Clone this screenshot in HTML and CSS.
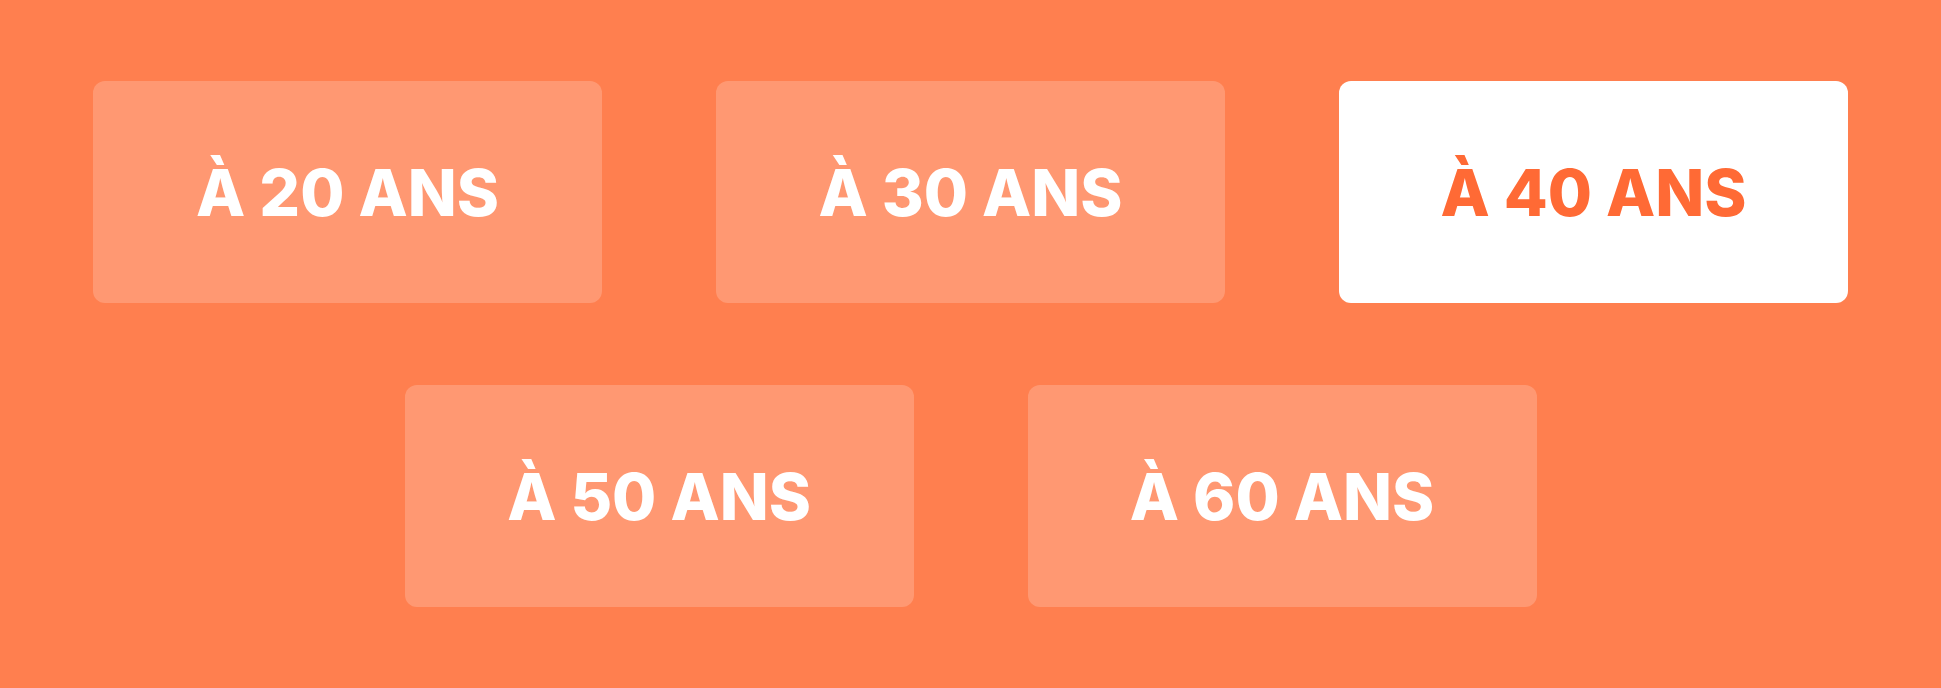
FILE: index.html
```html
<!DOCTYPE html>
<html lang="fr">
<head>
    <meta charset="UTF-8">
    <meta name="viewport" content="width=device-width, initial-scale=1.0">
    <title>Âge</title>
    <link rel="stylesheet" href="styles.css">
</head>
<body>
    <div class="ages">
        <div class="row">
            <button class="age-btn">À 20 ANS</button>
            <button class="age-btn">À 30 ANS</button>
            <button class="age-btn active">À 40 ANS</button>
        </div>
        <div class="row">
            <button class="age-btn">À 50 ANS</button>
            <button class="age-btn">À 60 ANS</button>
        </div>
    </div>
</body>
</html>
```

FILE: styles.css
```css
html, body {
    margin: 0;
    height: 100%;
}
body {
    font-family: Inter, "Liberation Sans", Arial, sans-serif;
    background-color: #ff7f4f;
    display: flex;
    justify-content: center;
    align-items: center;
}
.ages {
    display: flex;
    flex-direction: column;
    align-items: center;
    gap: 82px;
}
.row {
    display: flex;
    gap: 114px;
}
.age-btn {
    width: 509px;
    height: 222px;
    border: none;
    border-radius: 12px;
    background: rgba(255, 255, 255, 0.2);
    color: white;
    font-family: inherit;
    font-size: 64px;
    font-weight: 800;
    cursor: pointer;
    padding: 0;
}
.age-btn.active {
    background: white;
    color: #ff6a35;
}
```
